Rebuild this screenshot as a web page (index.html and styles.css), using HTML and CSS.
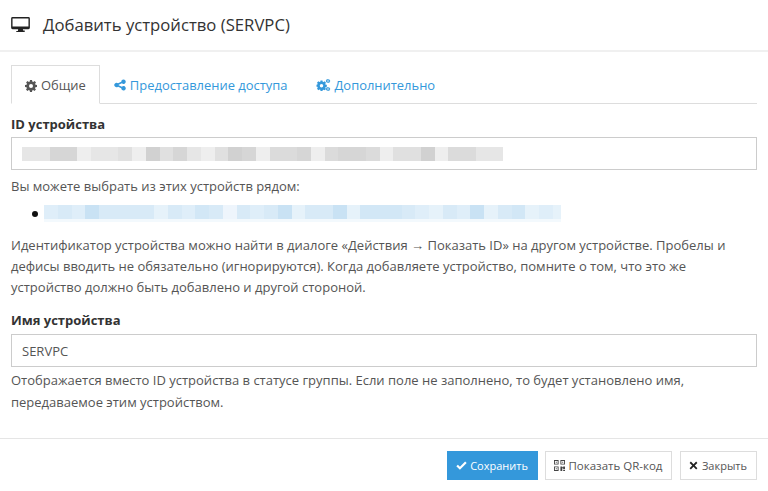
FILE: index.html
```html
<!DOCTYPE html>
<html lang="ru">
<head>
<meta charset="utf-8">
<title>Добавить устройство</title>
<link rel="stylesheet" href="styles.css">
</head>
<body>
<div class="modal">
  <header class="head">
    <svg class="head-icon" viewBox="0 0 20 16"><path fill="#222" fill-rule="evenodd" d="M1.500 0h17A1.500 1.500 0 0 1 20 1.500v10a1.500 1.500 0 0 1-1.500 1.500H12.500l.3 1.500h1.700V16h-9v-1h1.700l.3-2H1.500A1.500 1.500 0 0 1 0 11.500v-10A1.500 1.500 0 0 1 1.500 0zM1.500 1.500v8.500h17V1.500z"/></svg>
    <h1 class="title">Добавить устройство (SERVPC)</h1>
  </header>
  <div class="body">
    <nav class="tabs">
      <a class="tab active"><svg class="ico" viewBox="0 0 24 24"><path fill="#555" fill-rule="evenodd" d="M10 0h4l.6 3.200 1.900.8 2.700-1.800 2.800 2.800-1.800 2.700.8 1.900L24 10v4l-3.200.6-.8 1.900 1.800 2.700-2.800 2.800-2.700-1.800-1.900.8L14 24h-4l-.6-3.200-1.900-.8-2.700 1.800L2 19l1.800-2.700-.8-1.900L0 14v-4l3.200-.6.800-1.900L2.200 4.800 5 2l2.700 1.800 1.900-.8zM12 8a4 4 0 1 0 0 8 4 4 0 0 0 0-8z"/></svg>Общие</a>
      <a class="tab"><svg class="ico" viewBox="0 0 24 24"><path fill="#3498db" d="M19 1a4.500 4.500 0 1 1-3.200 7.700l-6.400 3a4.500 4.500 0 0 1 0 .7l6.400 3a4.500 4.500 0 1 1-1.300 3.100l-6.400-3.100a4.500 4.500 0 1 1 0-6.800l6.400-3.100A4.500 4.500 0 0 1 19 1z"/></svg>Предоставление доступа</a>
      <a class="tab"><svg class="ico ico-wide" viewBox="0 0 28 24"><path fill="#3498db" fill-rule="evenodd" d="M8 3h4l.4 2.400 1.800.7 2-1.400 2.800 2.800-1.400 2 .7 1.800 2.400.4v4l-2.400.4-.7 1.800 1.400 2-2.800 2.800-2-1.400-1.800.7L12 24H8l-.4-2.400-1.800-.7-2 1.400L1 19.500l1.400-2-.7-1.800L0 15.500v-4l1.700-.4.700-1.800-1.400-2L3.800 4.700l2 1.400 1.800-.7zM10 10a3.500 3.500 0 1 0 0 7 3.500 3.500 0 0 0 0-7z"/><path fill="#3498db" fill-rule="evenodd" d="M22 0h2l.3 1.300 1 .5 1.200-.6 1 1.500-1 .9v1.200l1 .9-1 1.500-1.200-.6-1 .5L24 8h-2l-.3-1.300-1-.5-1.200.6-1-1.500 1-.9V3.200l-1-.9 1-1.500 1.200.6 1-.5zM23 2.500a1.500 1.500 0 1 0 0 3 1.500 1.500 0 0 0 0-3zM22 16h2l.3 1.300 1 .5 1.200-.6 1 1.500-1 .9v1.200l1 .9-1 1.500-1.200-.6-1 .5L24 24h-2l-.3-1.300-1-.5-1.200.6-1-1.500 1-.9v-1.200l-1-.9 1-1.500 1.200.6 1-.5zM23 18.500a1.500 1.500 0 1 0 0 3 1.500 1.500 0 0 0 0-3z"/></svg>Дополнительно</a>
    </nav>
    <label class="label label-id">ID устройства</label>
    <div class="input input-id">
      <div class="blur"><i class="g1"></i><i class="g1"></i><i class="g4"></i><i class="g4"></i><i class="g0"></i><i class="g1"></i><i class="g1"></i><i class="g2"></i><i class="g0"></i><i class="g5"></i><i class="g2"></i><i class="g4"></i><i class="g1"></i><i class="g0"></i><i class="g2"></i><i class="g5"></i><i class="g4"></i><i class="g0"></i><i class="g3"></i><i class="g3"></i><i class="g4"></i><i class="g0"></i><i class="g3"></i><i class="g4"></i><i class="g4"></i><i class="g3"></i><i class="g0"></i><i class="g2"></i><i class="g2"></i><i class="g5"></i><i class="g0"></i><i class="g3"></i><i class="g3"></i><i class="g1"></i><i class="g1"></i></div>
    </div>
    <p class="help help-near">Вы можете выбрать из этих устройств рядом:</p>
    <ul class="near"><li class="near-item"><div class="blur blur-blue"><i class="b2"></i><i class="b3"></i><i class="b2"></i><i class="b5"></i><i class="b3"></i><i class="b3"></i><i class="b3"></i><i class="b3"></i><i class="b1"></i><i class="b3"></i><i class="b2"></i><i class="b4"></i><i class="b3"></i><i class="b0"></i><i class="b3"></i><i class="b2"></i><i class="b3"></i><i class="b5"></i><i class="b1"></i><i class="b3"></i><i class="b3"></i><i class="b5"></i><i class="b1"></i><i class="b4"></i><i class="b4"></i><i class="b4"></i><i class="b3"></i><i class="b2"></i><i class="b1"></i><i class="b3"></i><i class="b2"></i><i class="b5"></i><i class="b1"></i><i class="b3"></i><i class="b4"></i><i class="b1"></i><i class="b2"></i><i class="b1"></i></div></li></ul>
    <p class="help help-desc">Идентификатор устройства можно найти в диалоге «Действия → Показать ID» на другом устройстве. Пробелы и дефисы вводить не обязательно (игнорируются). Когда добавляете устройство, помните о том, что это же устройство должно быть добавлено и другой стороной.</p>
    <label class="label label-name">Имя устройства</label>
    <div class="input input-name">SERVPC</div>
    <p class="help help-name">Отображается вместо ID устройства в статусе группы. Если поле не заполнено, то будет установлено имя, передаваемое этим устройством.</p>
  </div>
  <footer class="foot">
    <button class="btn primary"><svg class="bico bico-check" viewBox="0 0 14 12"><path fill="#fff" d="M5 11.500.4 6.900l2-2L5 7.500 11.600.9l2 2z"/></svg>Сохранить</button>
    <button class="btn btn-qr"><svg class="bico bico-qr" viewBox="0 0 12 12"><path fill="#444" fill-rule="evenodd" d="M0 0h5v5H0zM1 1v3h3V1zM2 2h1v1H2zM7 0h5v5H7zM8 1v3h3V1zM9 2h1v1H9zM0 7h5v5H0zM1 8v3h3V8zM2 9h1v1H2zM7 7h2v1h1V7h2v3h-2v-1H9v3H7zM10 11h2v1h-2z"/></svg>Показать QR-код</button>
    <button class="btn"><svg class="bico bico-x" viewBox="0 0 12 12"><path fill="#222" d="M2.500.8 6 4.300 9.500.8l1.700 1.700L7.700 6l3.500 3.500-1.700 1.700L6 7.700l-3.500 3.500-1.700-1.700L4.300 6 .8 2.500z"/></svg>Закрыть</button>
  </footer>
</div>
</body>
</html>
```
FILE: styles.css
```css
html, body { margin: 0; padding: 0; background: #fff; }
body { font-family: "Open Sans", sans-serif; font-size: 13px; line-height: 21px; color: #555; width: 768px; height: 491px; overflow: hidden; }
.modal { display: flex; flex-direction: column; height: 491px; }
.head { display: flex; align-items: center; height: 50px; padding: 0 11px; border-bottom: 2px solid #f0f0f0; }
.head-icon { width: 19px; height: 15px; margin-right: 13px; margin-top: -1px; }
.title { margin: 0 0 1px; font-size: 16.7px; font-weight: 400; color: #333; }
.body { padding: 13px 11px 0; flex: 1; }
.tabs { display: flex; height: 38px; border-bottom: 1px solid #ddd; font-size: 12.95px; }
.tab { display: flex; align-items: center; height: 38px; padding: 2px 14px 0; color: #3498db; box-sizing: border-box; white-space: nowrap; }
.tab.active { color: #555; background: #fff; border: 1px solid #ddd; border-bottom-color: #fff; height: 39px; padding: 2px 13px 0; }
.ico { width: 12px; height: 12px; margin-right: 4px; }
.ico-wide { width: 15px; }
.label { display: block; font-weight: 700; color: #333; }
.label-id { margin-top: 10px; }
.label-name { margin-top: 12px; }
.input { height: 33px; border: 1px solid #ccc; box-sizing: border-box; margin-top: 2px; padding: 5px 10px; color: #555; }
.input-id { display: flex; align-items: center; }
.input-name { margin-top: 3px; padding-top: 6px; }
.blur { display: flex; height: 14px; width: 481px; overflow: hidden; }
.input-id .blur { margin-top: 1px; }
.blur-blue { width: 517px; height: 17px; align-items: flex-start; background: #f3f9fd; }
.blur i { flex: none; width: 13.75px; height: 14px; }
.g0 { background: #eee; }
.g1 { background: #e6e6e6; }
.g2 { background: #e0e0e0; }
.g3 { background: #dbdbdb; }
.g4 { background: #d6d6d6; }
.g5 { background: #d1d1d1; }
.b0 { background: #eef5fc; }
.b1 { background: #e6f2fa; }
.b2 { background: #dfeef9; }
.b3 { background: #d8eaf7; }
.b4 { background: #d2e7f6; }
.b5 { background: #c9e2f4; }
.help { margin: 0; }
.help-near { margin-top: 6px; }
.near { margin: 6px 0 0; padding: 0 0 0 33px; list-style: none; }
.near-item { position: relative; height: 21px; padding-top: 2px; box-sizing: border-box; }
.near-item::before { content: ""; position: absolute; left: -12px; top: 8px; width: 6px; height: 6px; border-radius: 50%; background: #111; }
.help-desc { margin-top: 11px; }
.help-name { margin-top: 2px; line-height: 22px; }
.foot { display: flex; justify-content: flex-end; gap: 7.5px; padding: 12px 11px 0; height: 53px; box-sizing: border-box; border-top: 1px solid #e5e5e5; }
.btn { height: 29px; font: inherit; font-size: 11px; line-height: 1; padding: 0 9px 0 8px; border: 1px solid #ddd; background: #fff; color: #555; display: flex; align-items: center; }
.btn-qr { font-size: 11.5px; }
.btn.primary { background: #3498db; border-color: #3498db; color: #fff; }
.bico { height: 11px; margin-right: 3px; }
.bico-check { width: 11px; }
.bico-qr { width: 11px; }
.bico-x { width: 9px; margin-right: 4px; }
```
